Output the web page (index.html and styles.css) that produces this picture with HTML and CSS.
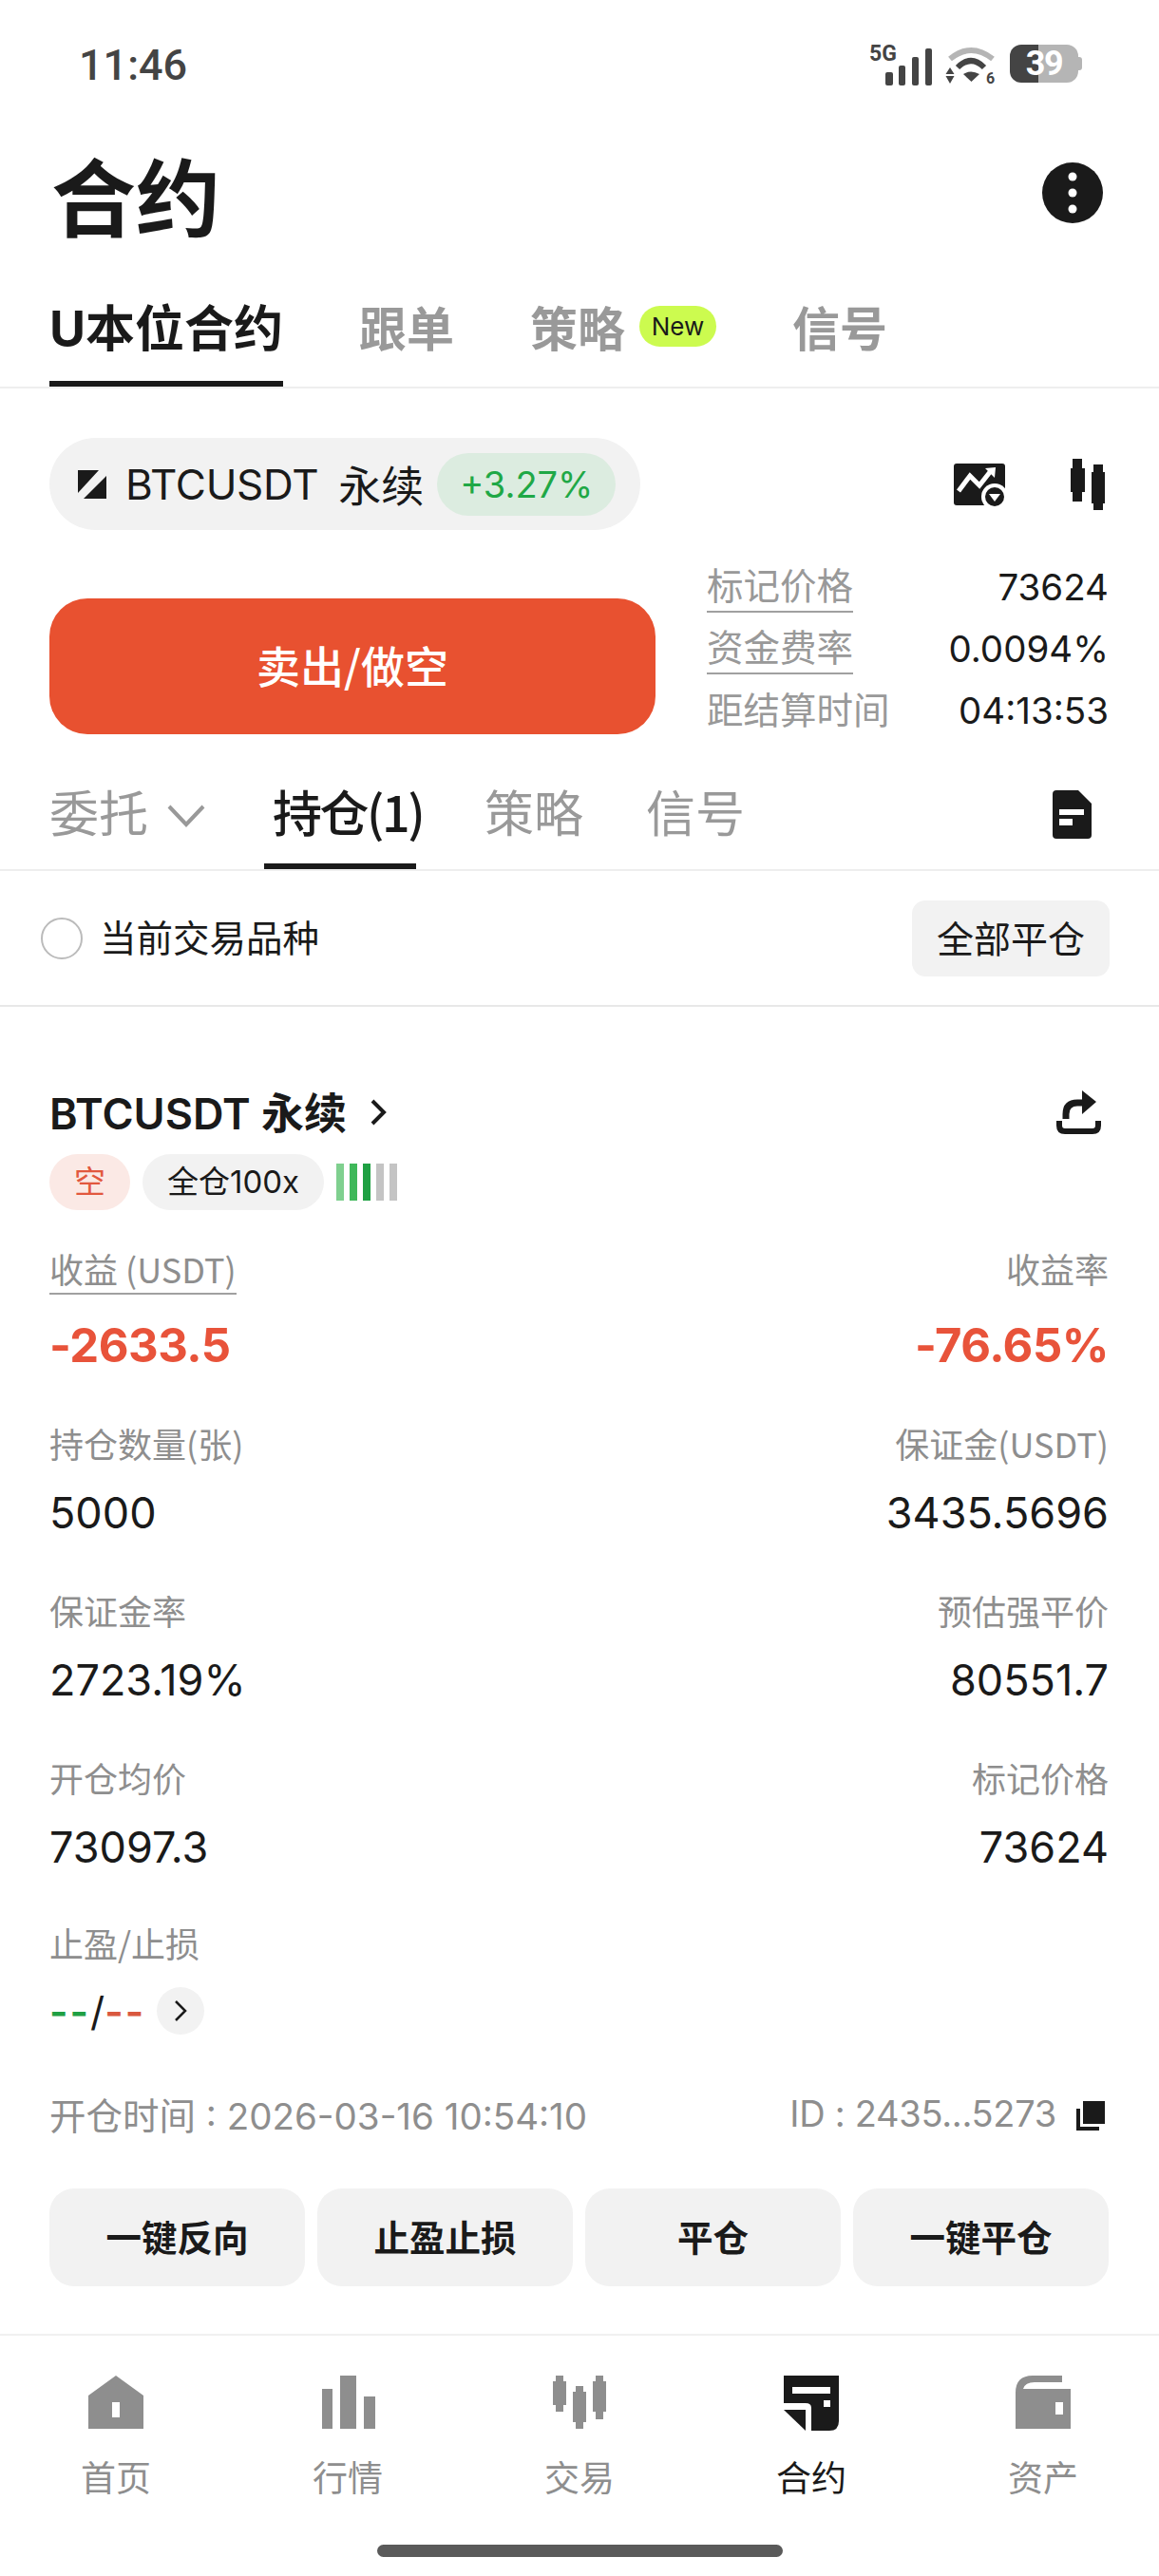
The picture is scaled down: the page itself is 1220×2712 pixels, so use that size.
FILE: index.html

```html
<!DOCTYPE html>
<html lang="zh-CN">
<head>
<meta charset="utf-8"/>
<title>合约</title>
<link rel="stylesheet" href="styles.css">
</head>
<body>

<div class="status">
  <span class="time">11:46</span>
  <div class="status-icons">
    <svg class="signal" viewBox="0 0 66 43">
      <text x="0" y="17" class="net">5G</text>
      <rect x="17" y="29" width="8" height="14" rx="2"/>
      <rect x="31" y="22" width="7" height="21" rx="2"/>
      <rect x="45" y="13" width="7" height="30" rx="2"/>
      <rect x="59" y="4" width="7" height="39" rx="2"/>
    </svg>
    <svg class="wifi" viewBox="0 0 56 42">
      <path d="M5 15 Q27 -3 50 15" fill="none" stroke="#b5b5b5" stroke-width="6"/>
      <path d="M13 24 Q27 10 41 24" fill="none" stroke="#444" stroke-width="6"/>
      <path d="M19 31 Q27 26 36 31 L27.5 39 Z" fill="#444"/>
      <path d="M5 24 L9.500 31 H0.500 Z M0.500 33 H9.500 L5 41 Z" fill="#444"/>
      <text x="43" y="41" class="wifi-num">6</text>
    </svg>
    <div class="battery"><span>39</span></div>
  </div>
</div>

<div class="title-row">
  <h1>合约</h1>
  <svg class="more" viewBox="0 0 64 64">
    <circle cx="32" cy="32" r="32" fill="#1a1a1a"/>
    <circle cx="32" cy="15" r="4.500" fill="#fff"/>
    <circle cx="32" cy="32" r="4.500" fill="#fff"/>
    <circle cx="32" cy="49" r="4.500" fill="#fff"/>
  </svg>
</div>

<div class="tabs main-tabs">
  <div class="tab active">U本位合约</div>
  <div class="tab">跟单</div>
  <div class="tab">策略<span class="new">New</span></div>
  <div class="tab">信号</div>
</div>

<div class="ticker-row">
  <div class="ticker">
    <svg class="ticker-logo" viewBox="0 0 30 30">
      <path d="M0 0 H22 L0 24 Z M30 6 V30 H6 Z" fill="#1a1a1a"/>
    </svg>
    <span class="symbol">BTCUSDT</span>
    <span class="perp">永续</span>
    <span class="change">+3.27%</span>
  </div>
  <div class="ticker-tools">
    <svg class="chart-icon" viewBox="0 0 58 50">
      <rect x="0" y="0" width="54" height="44" rx="3" fill="#1a1a1a"/>
      <path d="M5 29 L17 13 L27 23 L38 9" fill="none" stroke="#fff" stroke-width="5"/>
      <path d="M33 5 L44 4 L43 15 Z" fill="#fff"/>
      <circle cx="43" cy="35" r="14" fill="#fff"/>
      <circle cx="43" cy="35" r="10" fill="#1a1a1a"/>
      <path d="M37 32 H49 L43 40 Z" fill="#fff"/>
    </svg>
    <svg class="candle-icon" viewBox="0 0 36 54">
      <path d="M2 0 H12 V10 H15 V35 H12 V45 H2 V35 H0 V10 H2 Z" fill="#1a1a1a"/>
      <path d="M24 6 H34 V14 H36 V47 H34 V54 H24 V47 H22 V14 H24 Z" fill="#1a1a1a"/>
    </svg>
  </div>
</div>

<div class="trade-row">
  <div class="sell-btn">卖出/做空</div>
  <div class="info">
    <div class="info-row"><span class="info-label dotted">标记价格</span><span class="info-val">73624</span></div>
    <div class="info-row"><span class="info-label dotted">资金费率</span><span class="info-val">0.0094%</span></div>
    <div class="info-row"><span class="info-label">距结算时间</span><span class="info-val">04:13:53</span></div>
  </div>
</div>

<div class="tabs order-tabs">
  <div class="tab light">委托<svg class="tab-arrow" viewBox="0 0 40 26"><path d="M2 3 L20 22 L38 3" fill="none" stroke="#999" stroke-width="4"/></svg></div>
  <div class="tab light active">持仓(1)</div>
  <div class="tab light">策略</div>
  <div class="tab light">信号</div>
  <svg class="doc-icon" viewBox="0 0 41 51">
    <path d="M4 0 H27 L41 14 V47 Q41 51 37 51 H4 Q0 51 0 47 V4 Q0 0 4 0 Z" fill="#1a1a1a"/>
    <rect x="7" y="20" width="26" height="6" fill="#fff"/>
    <rect x="7" y="30" width="14" height="7" fill="#fff"/>
  </svg>
</div>

<div class="filter-row">
  <div class="filter">
    <span class="radio"></span>
    <span class="filter-text">当前交易品种</span>
  </div>
  <div class="close-all">全部平仓</div>
</div>

<div class="card">
  <div class="card-head">
    <div class="card-title">
      <span>BTCUSDT 永续</span>
      <svg class="title-arrow" viewBox="0 0 18 28">
        <path d="M3 2 L15 14 L3 26" fill="none" stroke="#1a1a1a" stroke-width="4"/>
      </svg>
    </div>
    <svg class="share-icon" viewBox="0 0 47 46">
      <path d="M3 32 V37 Q3 43 9 43 H38 Q44 43 44 37 V32" fill="none" stroke="#1a1a1a" stroke-width="6"/>
      <path d="M10 30 V25 Q10 13 22 13 H29" fill="none" stroke="#1a1a1a" stroke-width="7"/>
      <path d="M27 0 L42 12 L27 25 Z" fill="#1a1a1a"/>
    </svg>
  </div>

  <div class="tags">
    <span class="tag short">空</span>
    <span class="tag">全仓100x</span>
    <div class="risk">
      <i class="lvl1"></i><i class="lvl2"></i><i class="lvl3"></i><i></i><i></i>
    </div>
  </div>

  <div class="stat-row first">
    <div class="stat">
      <div class="label dotted">收益 (USDT)</div>
      <div class="value pnl">-2633.5</div>
    </div>
    <div class="stat right">
      <div class="label">收益率</div>
      <div class="value pnl">-76.65%</div>
    </div>
  </div>
  <div class="stat-row">
    <div class="stat">
      <div class="label">持仓数量(张)</div>
      <div class="value">5000</div>
    </div>
    <div class="stat right">
      <div class="label">保证金(USDT)</div>
      <div class="value">3435.5696</div>
    </div>
  </div>
  <div class="stat-row">
    <div class="stat">
      <div class="label">保证金率</div>
      <div class="value">2723.19%</div>
    </div>
    <div class="stat right">
      <div class="label">预估强平价</div>
      <div class="value">80551.7</div>
    </div>
  </div>
  <div class="stat-row">
    <div class="stat">
      <div class="label">开仓均价</div>
      <div class="value">73097.3</div>
    </div>
    <div class="stat right">
      <div class="label">标记价格</div>
      <div class="value">73624</div>
    </div>
  </div>
  <div class="stat-row last">
    <div class="stat">
      <div class="label">止盈/止损</div>
      <div class="tpsl">
        <span class="tp">--</span><span class="slash">/</span><span class="sl">--</span>
        <span class="tpsl-btn">
          <svg viewBox="0 0 14 24"><path d="M2 2 L12 12 L2 22" fill="none" stroke="#1a1a1a" stroke-width="2.500"/></svg>
        </span>
      </div>
    </div>
  </div>

  <div class="meta">
    <span class="meta-text">开仓时间 : 2026-03-16 10:54:10</span>
    <div class="meta-id">
      <span class="meta-text tight">ID : 2435...5273</span>
      <svg class="copy-icon" viewBox="0 0 30 31">
        <path d="M0 8 H4 V27 H24 V31 H0 Z" fill="#1a1a1a"/>
        <rect x="7" y="0" width="23" height="24" fill="#1a1a1a"/>
      </svg>
    </div>
  </div>

  <div class="actions">
    <div class="action">一键反向</div>
    <div class="action">止盈止损</div>
    <div class="action">平仓</div>
    <div class="action">一键平仓</div>
  </div>
</div>

<div class="nav">
  <div class="nav-item">
    <svg viewBox="0 0 58 58"><path fill-rule="evenodd" d="M29 0 L58 21 V56 H0 V21 Z M25 28 V44 H33 V28 Z" fill="#8e8e8e"/></svg>
    <span>首页</span>
  </div>
  <div class="nav-item">
    <svg viewBox="0 0 58 58"><path d="M2 14 H13 V56 H2 Z M21 0 H38 V56 H21 Z M46 22 H58 V56 H46 Z" fill="#8e8e8e"/></svg>
    <span>行情</span>
  </div>
  <div class="nav-item">
    <svg viewBox="0 0 58 58">
      <path d="M4 0 H12 V6 H15 V31 H12 V38 H4 V31 H1 V6 H4 Z" fill="#8e8e8e"/>
      <path d="M25 11 H33 V17 H36 V49 H33 V56 H25 V49 H22 V17 H25 Z" fill="#8e8e8e"/>
      <path d="M46 0 H54 V6 H57 V38 H54 V46 H46 V38 H43 V6 H46 Z" fill="#8e8e8e"/>
    </svg>
    <span>交易</span>
  </div>
  <div class="nav-item active">
    <svg viewBox="0 0 58 58">
      <path fill-rule="evenodd" d="M0 0 H58 V48 Q58 58 48 58 H29 V34 Q29 29 23 29 H0 Z M9 12 V19 H49 V12 Z M42 26 V33 H49 V26 Z" fill="#1a1a1a"/>
      <path d="M0 36 H23 V58 Z" fill="#1a1a1a"/>
    </svg>
    <span>合约</span>
  </div>
  <div class="nav-item">
    <svg viewBox="0 0 58 58"><path fill-rule="evenodd" d="M0 56 V18 Q0 0 18 0 H49 V7 H20 Q10 7 8 14 H58 V56 Z M42 28 V41 H50 V28 Z" fill="#8e8e8e"/></svg>
    <span>资产</span>
  </div>
</div>

<div class="home-bar"></div>

</body>
</html>
```

FILE: styles.css

```css
* {
  box-sizing: border-box;
}
html, body {
  margin: 0;
  padding: 0;
}
body {
  width: 1220px;
  height: 2712px;
  overflow: hidden;
  background: #fff;
  color: #1a1a1a;
  font-family: "Inter", "Noto Sans CJK SC", "Noto Sans", sans-serif;
}

/* status bar */
.status {
  height: 136px;
  padding: 0 85px 0 83px;
  display: flex;
  justify-content: space-between;
  align-items: center;
}
.time {
  font-family: "Roboto", sans-serif;
  font-size: 45px;
  font-weight: 500;
  color: #444;
}
.status-icons {
  display: flex;
  align-items: flex-start;
  height: 43px;
}
.signal {
  width: 66px;
  height: 43px;
  fill: #444;
  overflow: visible;
}
.net {
  font-family: "Roboto", sans-serif;
  font-size: 23px;
  font-weight: 700;
}
.wifi {
  width: 56px;
  height: 42px;
  margin-left: 14px;
  overflow: visible;
}
.wifi-num {
  font-family: "Roboto", sans-serif;
  font-size: 16px;
  font-weight: 700;
  fill: #444;
}
.battery {
  position: relative;
  width: 72px;
  height: 40px;
  margin-left: 12px;
  border-radius: 12px;
  background: linear-gradient(to right, #444 42%, #b5b5b5 42%);
  display: flex;
  align-items: center;
  justify-content: center;
  color: #fff;
  font-family: "Roboto", sans-serif;
  font-size: 36px;
  font-weight: 700;
  letter-spacing: -1.500px;
}
.battery::after {
  content: "";
  position: absolute;
  right: -4px;
  top: 13px;
  width: 4px;
  height: 14px;
  border-radius: 0 3px 3px 0;
  background: #b5b5b5;
}

/* title */
.title-row {
  height: 134px;
  padding: 0 59px 0 54px;
  display: flex;
  justify-content: space-between;
  align-items: center;
}
h1 {
  margin: 0;
  font-family: "Noto Sans CJK SC", sans-serif;
  font-size: 89px;
  font-weight: 700;
}
.more {
  width: 64px;
  height: 64px;
}

/* tabs */
.tabs {
  display: flex;
  padding: 0 52px;
  border-bottom: 2px solid #eeeeee;
  height: 139px;
}
.tab {
  padding-top: 47px;
  height: 137px;
  line-height: 60px;
  font-size: 52px;
  font-weight: 700;
  color: #999;
  white-space: nowrap;
  border-bottom: 6px solid transparent;
  display: flex;
  align-items: flex-start;
}
.tab.active {
  color: #1a1a1a;
  border-bottom-color: #1a1a1a;
}
.main-tabs .tab {
  margin-right: 80px;
  font-size: 50px;
}
.main-tabs .tab.active {
  font-size: 52px;
}
.main-tabs .tab:nth-child(2) {
  margin-right: 80px;
}
.new {
  margin: 5px 0 0 15px;
  width: 81px;
  height: 43px;
  border-radius: 22px;
  background: #ccfb4f;
  color: #1a1a1a;
  font-size: 26px;
  font-weight: 400;
  line-height: 43px;
  text-align: center;
}

/* ticker */
.ticker-row {
  padding: 52px 57px 0 52px;
  display: flex;
  justify-content: space-between;
  align-items: center;
}
.ticker {
  width: 622px;
  height: 97px;
  border-radius: 49px;
  background: #f2f2f2;
  padding-left: 30px;
  display: flex;
  align-items: center;
}
.ticker-logo {
  width: 30px;
  height: 30px;
}
.symbol {
  margin-left: 20px;
  font-size: 44px;
  letter-spacing: -0.300px;
}
.perp {
  margin-left: 21px;
  font-size: 45px;
}
.change {
  margin-left: 14px;
  width: 188px;
  height: 66px;
  border-radius: 33px;
  background: #dcece0;
  color: #1fa846;
  font-size: 38px;
  line-height: 66px;
  text-align: center;
}
.ticker-tools {
  display: flex;
  align-items: center;
}
.chart-icon {
  width: 58px;
  height: 50px;
  margin-top: 6px;
}
.candle-icon {
  width: 36px;
  height: 54px;
  margin-left: 65px;
}

/* sell + info */
.trade-row {
  padding: 27px 53px 0 52px;
  display: flex;
  height: 222px;
}
.sell-btn {
  margin-top: 45px;
  width: 638px;
  height: 143px;
  border-radius: 40px;
  background: #e85130;
  color: #fff;
  font-family: "Noto Sans CJK SC", sans-serif;
  font-size: 46px;
  font-weight: 500;
  line-height: 138px;
  text-align: center;
}
.info {
  margin-left: 54px;
  flex: 1;
}
.info-row {
  height: 65px;
  display: flex;
  justify-content: space-between;
  align-items: center;
}
.info-label {
  font-size: 38.500px;
  color: #999;
  line-height: 52px;
}
.dotted {
  border-bottom: 2px solid #a0a0a0;
}
.info-val {
  font-size: 38.500px;
}

/* order tabs */
.order-tabs {
  height: 137px;
}
.order-tabs .tab {
  padding-top: 44px;
  height: 135px;
  font-weight: 400;
  font-family: "Noto Sans CJK SC", sans-serif;
}
.order-tabs .tab:nth-child(1) {
  margin-right: 62px;
}
.order-tabs .tab.active {
  width: 160px;
  padding-left: 9px;
  margin-right: 72px;
  font-weight: 500;
  letter-spacing: -2.500px;
}
.order-tabs .tab:nth-child(3) {
  margin-right: 66px;
}
.tab-arrow {
  width: 40px;
  height: 26px;
  margin: 22px 0 0 20px;
  flex: none;
}
.doc-icon {
  width: 41px;
  height: 51px;
  margin: 52px 19px 0 auto;
}

/* filter */
.filter-row {
  height: 143px;
  padding: 0 52px 0 43px;
  border-bottom: 2px solid #e8e8e8;
  display: flex;
  justify-content: space-between;
  align-items: center;
}
.filter {
  display: flex;
  align-items: center;
  font-family: "Noto Sans CJK SC", sans-serif;
  font-size: 38.500px;
}
.filter-text {
  padding-bottom: 5px;
}
.radio {
  width: 44px;
  height: 44px;
  border: 2px solid #bbb;
  border-radius: 50%;
  margin-right: 18px;
}
.close-all {
  width: 208px;
  height: 80px;
  border-radius: 14px;
  background: #f2f2f2;
  font-family: "Noto Sans CJK SC", sans-serif;
  font-size: 39px;
  line-height: 77px;
  text-align: center;
}

/* position card */
.card {
  padding: 81px 53px 0 52px;
}
.card-head {
  display: flex;
  justify-content: space-between;
  align-items: center;
  height: 60px;
}
.card-title {
  display: flex;
  align-items: center;
  font-size: 45px;
  font-weight: 600;
  white-space: nowrap;
}
.card-title span {
  padding-bottom: 3px;
}
.title-arrow {
  width: 18px;
  height: 28px;
  margin-left: 24px;
}
.share-icon {
  width: 47px;
  height: 46px;
  margin-right: 8px;
}
.tags {
  margin-top: 14px;
  display: flex;
  align-items: center;
  height: 59px;
}
.tag {
  height: 59px;
  padding: 0 26px;
  margin-right: 13px;
  border-radius: 30px;
  background: #f2f2f2;
  font-size: 33px;
  line-height: 59px;
}
.tag.short {
  background: #fbe9e5;
  color: #e2583e;
}
.risk {
  display: flex;
  gap: 6.500px;
}
.risk i {
  width: 7.500px;
  height: 39px;
  background: #c4c4c4;
}
.risk .lvl1 {
  background: #7fd08f;
}
.risk .lvl2 {
  background: #3fb85a;
}
.risk .lvl3 {
  background: #1fa043;
}
.stat-row {
  display: flex;
  justify-content: space-between;
  margin-top: 45px;
}
.stat-row.first {
  margin-top: 39px;
}
.stat-row.last {
  margin-top: 43px;
}
.stat.right {
  text-align: right;
}
.label {
  display: inline-block;
  height: 50px;
  line-height: 45px;
  font-family: "Noto Sans CJK SC", sans-serif;
  font-size: 36px;
  color: #8e8e8e;
  white-space: nowrap;
}
.value {
  margin-top: 11px;
  height: 70px;
  line-height: 70px;
  font-size: 45px;
}
.value.pnl {
  margin-top: 19px;
  color: #e8533a;
  font-weight: 700;
  font-size: 49px;
  letter-spacing: -0.500px;
}
.tpsl {
  margin-top: 9px;
  height: 70px;
  display: flex;
  align-items: center;
  font-size: 42px;
}
.tp {
  color: #1fa043;
  font-weight: 600;
  letter-spacing: 2px;
}
.sl {
  color: #d9583e;
  font-weight: 600;
  letter-spacing: 2px;
}
.tpsl-btn {
  width: 50px;
  height: 50px;
  margin-left: 12px;
  border-radius: 50%;
  background: #f2f2f2;
  display: flex;
  align-items: center;
  justify-content: center;
}
.tpsl-btn svg {
  width: 14px;
  height: 24px;
}
.meta {
  margin-top: 45px;
  height: 60px;
  display: flex;
  justify-content: space-between;
  align-items: center;
  font-size: 38.500px;
  color: #8e8e8e;
}
.meta-text {
  padding-bottom: 4px;
}
.meta-text.tight {
  font-size: 38px;
  letter-spacing: -0.300px;
}
.meta-id {
  display: flex;
  align-items: center;
}
.copy-icon {
  width: 30px;
  height: 31px;
  margin: 0 4px 0 21px;
}
.actions {
  margin-top: 47px;
  display: grid;
  grid-template-columns: repeat(4, 1fr);
  gap: 13px;
}
.action {
  height: 103px;
  border-radius: 26px;
  background: #f2f2f2;
  font-family: "Noto Sans CJK SC", sans-serif;
  font-size: 37.500px;
  font-weight: 700;
  line-height: 100px;
  text-align: center;
}

/* bottom nav */
.nav {
  margin-top: 50px;
  border-top: 2px solid #f0f0f0;
  padding-top: 42px;
  display: grid;
  grid-template-columns: repeat(5, 244px);
}
.nav-item {
  display: flex;
  flex-direction: column;
  align-items: center;
  font-family: "Noto Sans CJK SC", sans-serif;
  font-size: 37px;
  color: #8e8e8e;
  height: 178px;
}
.nav-item svg {
  width: 58px;
  height: 58px;
}
.nav-item span {
  margin-top: 23px;
  line-height: 50px;
}
.nav-item.active {
  color: #1a1a1a;
}
.home-bar {
  width: 427px;
  height: 13px;
  margin: 0 auto;
  border-radius: 7px;
  background: #5a5a5a;
}
```
